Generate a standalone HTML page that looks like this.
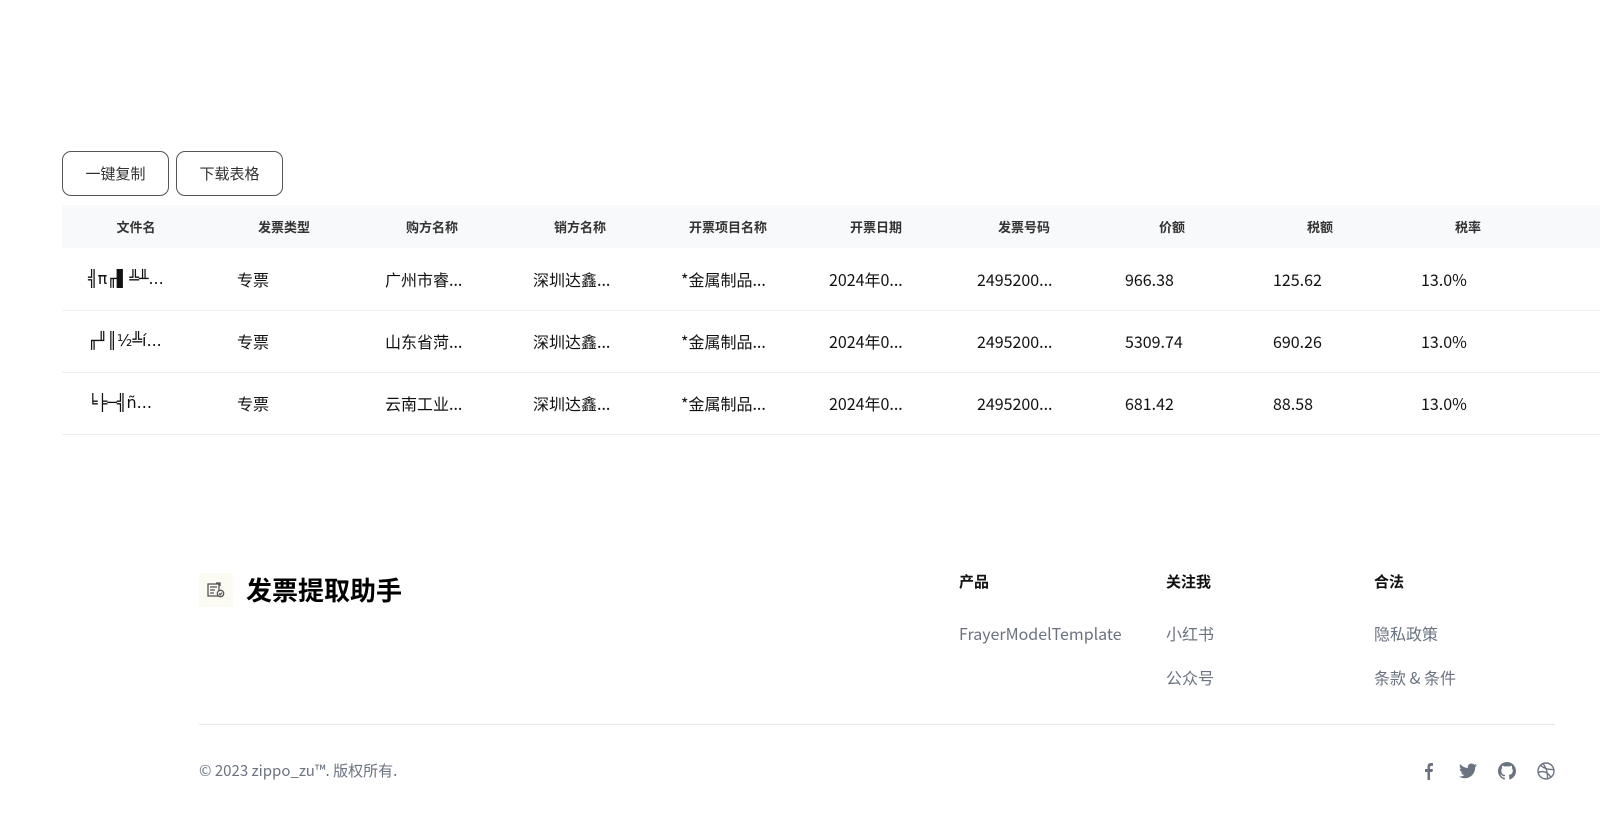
<!DOCTYPE html>
<html><head><meta charset="utf-8"><style>
*{margin:0;padding:0;box-sizing:border-box}
body{width:1600px;height:825px;background:#fff;font-family:"Noto Sans CJK SC","Liberation Sans",sans-serif;color:#111;position:relative;overflow:hidden;line-height:1.3}
.btn{position:absolute;top:151px;height:45px;border:1px solid #555;border-radius:9px;background:#fff;font-size:15px;color:#333;display:flex;align-items:center;justify-content:center}
table{position:absolute;left:62px;top:205px;width:1506px;border-collapse:collapse;table-layout:fixed}
th{height:43px;background:#f8f9fb;font-size:13px;font-weight:bold;color:#333;text-align:center;width:148px;line-height:20px}
th.last{width:174px}
td{height:62px;border-bottom:1px solid #eceef1;font-size:16px;padding-left:27px;white-space:nowrap;color:#111;line-height:22px;vertical-align:middle}
td.f{padding-left:26px;font-family:"DejaVu Sans","Noto Sans CJK SC",sans-serif;font-size:16px}
.abs{position:absolute}
.h{font-size:15px;font-weight:bold;top:572px}
.l{font-size:16px;color:#6b7280;line-height:22px}
</style></head><body>
<div class="btn" style="left:62px;width:107px">一键复制</div>
<div class="btn" style="left:176px;width:107px">下载表格</div>
<table>
<tr><th>文件名</th><th>发票类型</th><th>购方名称</th><th>销方名称</th><th>开票项目名称</th><th>开票日期</th><th>发票号码</th><th>价额</th><th>税额</th><th>税率</th><th class="last"></th></tr>
<tr><td class="f">╣π╓▌╩╨...</td><td>专票</td><td>广州市睿...</td><td>深圳达鑫...</td><td>*金属制品...</td><td>2024年0...</td><td>2495200...</td><td>966.38</td><td>125.62</td><td>13.0%</td><td></td></tr>
<tr><td class="f">╓╜║½╩í...</td><td>专票</td><td>山东省菏...</td><td>深圳达鑫...</td><td>*金属制品...</td><td>2024年0...</td><td>2495200...</td><td>5309.74</td><td>690.26</td><td>13.0%</td><td></td></tr>
<tr><td class="f">╘╞─╣ñ...</td><td>专票</td><td>云南工业...</td><td>深圳达鑫...</td><td>*金属制品...</td><td>2024年0...</td><td>2495200...</td><td>681.42</td><td>88.58</td><td>13.0%</td><td></td></tr>
</table>
<div class="abs" style="left:199px;top:573px;width:34px;height:34px;background:#fbfaf3;display:flex;align-items:center;justify-content:center">
<svg width="18" height="16" viewBox="0 0 18 16" fill="none" stroke="#555" stroke-width="1.3"><rect x="1" y="2" width="11" height="12"/><path d="M3 5h7M3 8h5M3 11h4"/><circle cx="13.5" cy="11.5" r="3.2" fill="#fff"/><path d="M12 11.5l1.2 1.2 1.8-2"/><path d="M9 1h4v3"/></svg></div>
<div class="abs" style="left:246px;top:571px;font-size:26px;font-weight:bold;color:#000;line-height:38px">发票提取助手</div>
<div class="abs h" style="left:959px">产品</div>
<div class="abs h" style="left:1166px">关注我</div>
<div class="abs h" style="left:1374px">合法</div>
<div class="abs l" style="left:959px;top:622px">FrayerModelTemplate</div>
<div class="abs l" style="left:1166px;top:622px">小红书</div>
<div class="abs l" style="left:1166px;top:666px">公众号</div>
<div class="abs l" style="left:1374px;top:622px">隐私政策</div>
<div class="abs l" style="left:1374px;top:666px">条款 &amp; 条件</div>
<div class="abs" style="left:199px;top:724px;width:1356px;height:1px;background:#e5e7eb"></div>
<div class="abs" style="left:199px;top:761px;font-size:15px;color:#6b7280">© 2023 zippo_zu™. 版权所有.</div>
<svg class="abs" style="left:1421px;top:762px" width="16" height="18" viewBox="0 0 16 18" fill="#6b7280"><path d="M9 18V10h2.5l.4-3H9V5.3c0-.8.3-1.4 1.4-1.4H12V1.2C11.6 1.1 10.8 1 9.9 1 7.9 1 6.5 2.2 6.5 4.6V7H4v3h2.5v8z"/></svg>
<svg class="abs" style="left:1459px;top:763px" width="18" height="16" viewBox="0 0 24 20" fill="#6b7280"><path d="M24 2.4c-.9.4-1.8.7-2.8.8 1-.6 1.8-1.6 2.2-2.7-1 .6-2 1-3.1 1.2C19.3.7 18 0 16.6 0c-2.7 0-4.9 2.2-4.9 4.9 0 .4 0 .8.1 1.1C7.7 5.8 4.1 3.9 1.7.9c-.4.7-.7 1.600-.7 2.5 0 1.7.9 3.2 2.2 4.1-.8 0-1.6-.2-2.2-.6v.1c0 2.4 1.7 4.4 3.9 4.8-.4.1-.8.2-1.3.2-.3 0-.6 0-.9-.1.6 2 2.4 3.4 4.6 3.4-1.7 1.3-3.8 2.1-6.1 2.1-.4 0-.8 0-1.2-.1C2.2 18.8 4.8 19.6 7.5 19.6c9.1 0 14-7.5 14-14v-.6c1-.7 1.8-1.6 2.5-2.6z"/></svg>
<svg class="abs" style="left:1498px;top:762px" width="18" height="18" viewBox="0 0 16 16" fill="#6b7280"><path d="M8 0C3.6 0 0 3.6 0 8c0 3.5 2.3 6.5 5.500 7.6.4.1.5-.2.5-.4v-1.4c-2.2.5-2.7-1-2.7-1-.4-.9-.9-1.2-.9-1.2-.7-.5.1-.5.1-.5.8.1 1.2.8 1.2.8.7 1.2 1.9.9 2.3.7.1-.5.3-.9.5-1.1-1.8-.2-3.6-.9-3.6-4 0-.9.3-1.6.8-2.1-.1-.2-.4-1 .1-2.1 0 0 .7-.2 2.2.8.6-.2 1.3-.3 2-.3s1.4.1 2 .3c1.5-1 2.2-.8 2.2-.8.4 1.1.2 1.900.1 2.1.5.6.8 1.3.8 2.1 0 3.1-1.9 3.7-3.6 3.9.3.3.5.8.5 1.5v2.2c0 .2.1.5.6.4C13.7 14.5 16 11.5 16 8c0-4.4-3.6-8-8-8z"/></svg>
<svg class="abs" style="left:1537px;top:762px" width="18" height="18" viewBox="0 0 18 18" fill="none" stroke="#6b7280" stroke-width="1.4"><circle cx="9" cy="9" r="8"/><path d="M3.5 3.2c3 3 7.5 4.5 13.3 4.3M1.2 10.5c4-1.8 9-1.5 12.8 5M6 1.5c3 3.8 4.8 9 4.5 15"/></svg>
</body></html>
